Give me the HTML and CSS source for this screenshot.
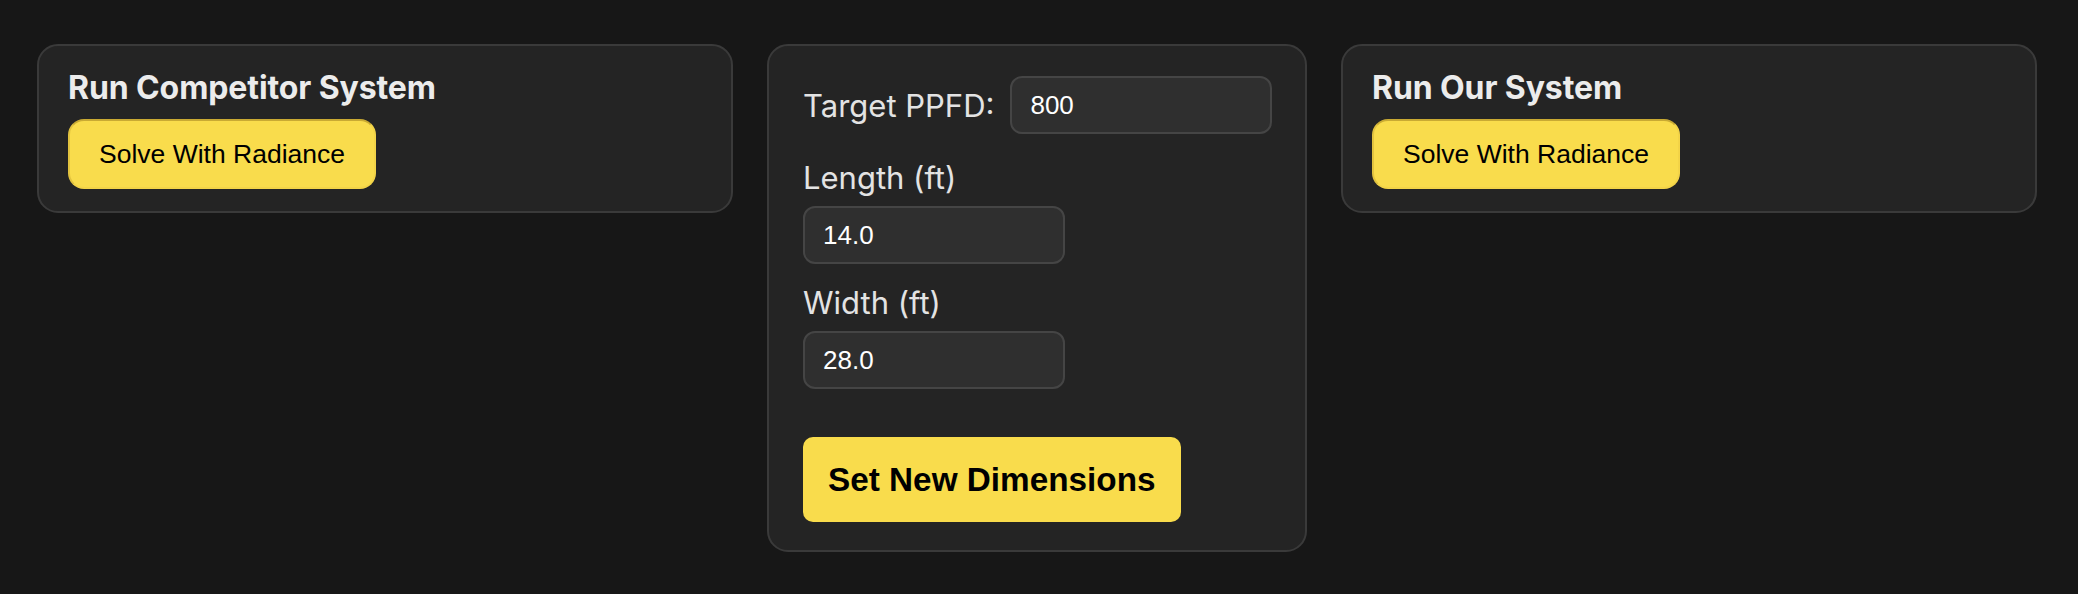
FILE: index.html
```html
<!DOCTYPE html>
<html lang="en">
<head>
<meta charset="utf-8">
<title>Radiance Solver</title>
<link rel="stylesheet" href="styles.css">
</head>
<body>
<main class="panels">
  <section class="card side">
    <h2 class="card-title">Run Competitor System</h2>
    <button class="btn-solve" type="button">Solve With Radiance</button>
  </section>

  <section class="card center">
    <div class="ppfd-row">
      <label class="label" for="ppfd">Target PPFD:</label>
      <input class="field-input" id="ppfd" type="text" value="800">
    </div>
    <div class="field first">
      <label class="label block" for="length">Length (ft)</label>
      <input class="field-input" id="length" type="text" value="14.0">
    </div>
    <div class="field second">
      <label class="label block" for="width">Width (ft)</label>
      <input class="field-input" id="width" type="text" value="28.0">
    </div>
    <button class="btn-set" type="button">Set New Dimensions</button>
  </section>

  <section class="card side">
    <h2 class="card-title">Run Our System</h2>
    <button class="btn-solve" type="button">Solve With Radiance</button>
  </section>
</main>
</body>
</html>
```

FILE: styles.css
```css
* {
  box-sizing: border-box;
}

html, body {
  margin: 0;
  background: #171717;
}

body {
  font-family: Inter, "Liberation Sans", sans-serif;
  color: #e6e6e6;
}

.panels {
  display: flex;
  align-items: flex-start;
  gap: 34px;
  padding: 44px 41px 0 37px;
}

.card {
  background: #242424;
  border: 2px solid #3a3a3a;
  border-radius: 21px;
}

.side {
  flex: 1 1 0;
  min-width: 0;
  padding: 24px 29px 22px 29px;
}

.center {
  flex: 0 0 540px;
  min-width: 0;
  padding: 30px 34px 28px 34px;
}

.card-title {
  margin: 0;
  font-family: Inter, "Liberation Sans", sans-serif;
  font-weight: 700;
  font-size: 32px;
  line-height: 36px;
  color: #ececec;
  letter-spacing: -0.1px;
}

.btn-solve {
  display: block;
  margin-top: 13px;
  height: 70px;
  padding: 0 29px;
  font-family: "Liberation Sans", Arial, sans-serif;
  font-size: 26.5px;
  color: #000;
  background: #f9dc4c;
  border: 2px solid;
  border-color: #c9aa33 #f3d448 #f3d448 #e2c33f;
  border-radius: 16px;
  cursor: pointer;
}

.ppfd-row {
  display: flex;
  align-items: center;
  gap: 16px;
}

.label {
  font-family: Inter, "Liberation Sans", sans-serif;
  font-size: 31px;
  line-height: 31px;
  color: #e3e3e3;
  white-space: nowrap;
}

.label.block {
  display: block;
}

.field-input {
  display: block;
  flex: none;
  width: 262px;
  height: 58px;
  padding: 0 18px;
  font-family: "Liberation Sans", Arial, sans-serif;
  font-size: 26px;
  color: #ffffff;
  background: #2f2f2f;
  border: 2px solid #454545;
  border-radius: 12px;
  outline: none;
}

.field.first {
  margin-top: 28px;
}

.field.second {
  margin-top: 23px;
}

.field .field-input {
  margin-top: 13px;
}

.btn-set {
  display: block;
  margin-top: 48px;
  height: 85px;
  padding: 0 25px;
  font-family: "Liberation Sans", Arial, sans-serif;
  font-weight: 700;
  font-size: 33.3px;
  color: #000;
  background: #f9dc4c;
  border: none;
  border-radius: 10px;
  cursor: pointer;
}
```
